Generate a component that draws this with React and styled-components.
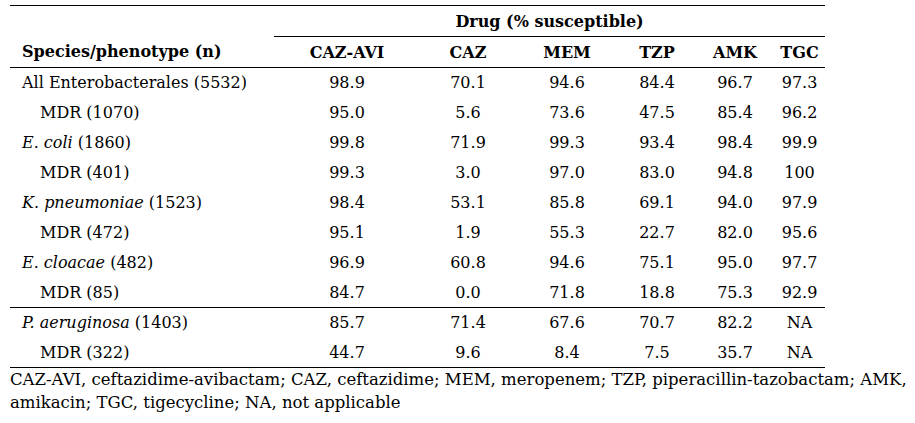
import styled, { createGlobalStyle } from 'styled-components';

const GlobalStyle = createGlobalStyle`
  html, body {
    margin: 0;
    padding: 0;
    background: #fff;
  }
`;

// Liberation Serif resolves to a sans face in this sandbox, so DejaVu Serif goes first
const serif = `"DejaVu Serif", "Liberation Serif", serif`;

const columns = [
  { key: 'cazavi', label: 'CAZ-AVI', width: 146 },
  { key: 'caz', label: 'CAZ', width: 96 },
  { key: 'mem', label: 'MEM', width: 102 },
  { key: 'tzp', label: 'TZP', width: 78 },
  { key: 'amk', label: 'AMK', width: 78 },
  { key: 'tgc', label: 'TGC', width: 51 },
];

const groups = [
  [
    { name: 'All Enterobacterales', n: 5532, values: ['98.9', '70.1', '94.6', '84.4', '96.7', '97.3'] },
    { name: 'MDR', n: 1070, sub: true, values: ['95.0', '5.6', '73.6', '47.5', '85.4', '96.2'] },
    { name: 'E. coli', italic: true, n: 1860, values: ['99.8', '71.9', '99.3', '93.4', '98.4', '99.9'] },
    { name: 'MDR', n: 401, sub: true, values: ['99.3', '3.0', '97.0', '83.0', '94.8', '100'] },
    { name: 'K. pneumoniae', italic: true, n: 1523, values: ['98.4', '53.1', '85.8', '69.1', '94.0', '97.9'] },
    { name: 'MDR', n: 472, sub: true, values: ['95.1', '1.9', '55.3', '22.7', '82.0', '95.6'] },
    { name: 'E. cloacae', italic: true, n: 482, values: ['96.9', '60.8', '94.6', '75.1', '95.0', '97.7'] },
    { name: 'MDR', n: 85, sub: true, values: ['84.7', '0.0', '71.8', '18.8', '75.3', '92.9'] },
  ],
  [
    { name: 'P. aeruginosa', italic: true, n: 1403, values: ['85.7', '71.4', '67.6', '70.7', '82.2', 'NA'] },
    { name: 'MDR', n: 322, sub: true, values: ['44.7', '9.6', '8.4', '7.5', '35.7', 'NA'] },
  ],
];

export default function App() {
  return (
    <Page>
      <GlobalStyle />
      <Table>
        <colgroup>
          <col style={{ width: 264 }} />
          {columns.map(c => <col key={c.key} style={{ width: c.width }} />)}
        </colgroup>
        <thead>
          <TopRow>
            <HeadCell />
            <GroupHead colSpan={6}>Drug (% susceptible)</GroupHead>
          </TopRow>
          <HeadRow>
            <SpeciesHead>Species/phenotype (n)</SpeciesHead>
            {columns.map(c => <HeadCell key={c.key}>{c.label}</HeadCell>)}
          </HeadRow>
        </thead>
        {groups.map((rows, gi) => (
          <Group key={gi} $divided={gi > 0}>
            {rows.map((r, ri) => (
              <Row key={ri}>
                <NameCell $sub={r.sub}>
                  {r.italic ? <i>{r.name}</i> : r.name} ({r.n})
                </NameCell>
                {r.values.map((v, vi) => <ValueCell key={vi}>{v}</ValueCell>)}
              </Row>
            ))}
          </Group>
        ))}
      </Table>
      <Note>
        CAZ-AVI, ceftazidime-avibactam; CAZ, ceftazidime; MEM, meropenem; TZP, piperacillin-tazobactam; AMK,<br />
        amikacin; TGC, tigecycline; NA, not applicable
      </Note>
    </Page>
  );
}

const Page = styled.div`
  width: 915px;
  height: 423px;
  padding: 5px 0 0 10px;
  box-sizing: border-box;
  overflow: hidden;
  font-family: ${serif};
  color: #000;
`;

const Table = styled.table`
  width: 815px;
  border-collapse: collapse;
  table-layout: fixed;
  font-family: ${serif};
  font-size: 16px;
  border-top: 1px solid #000;
  border-bottom: 1px solid #000;
`;

const TopRow = styled.tr`
  height: 31px;
`;

const HeadRow = styled.tr`
  height: 31px;
  border-bottom: 1px solid #000;
`;

const HeadCell = styled.th`
  padding: 0;
  font-family: ${serif};
  font-weight: bold;
  text-align: center;
  vertical-align: middle;
  white-space: nowrap;
`;

const GroupHead = styled(HeadCell)`
  border-bottom: 1px solid #000;
`;

const SpeciesHead = styled(HeadCell)`
  text-align: left;
  padding-left: 12px;
`;

const Group = styled.tbody`
  border-top: ${p => (p.$divided ? '1px solid #000' : '0')};
`;

const Row = styled.tr`
  height: 30px;
`;

const NameCell = styled.td`
  padding: 0 0 0 ${p => (p.$sub ? '30px' : '12px')};
  font-family: ${serif};
  white-space: nowrap;
  vertical-align: middle;
`;

const ValueCell = styled.td`
  padding: 0;
  font-family: ${serif};
  text-align: center;
  vertical-align: middle;
`;

const Note = styled.p`
  margin: 0;
  font-family: ${serif};
  font-size: 16.5px;
  line-height: 23px;
  white-space: nowrap;
`;
